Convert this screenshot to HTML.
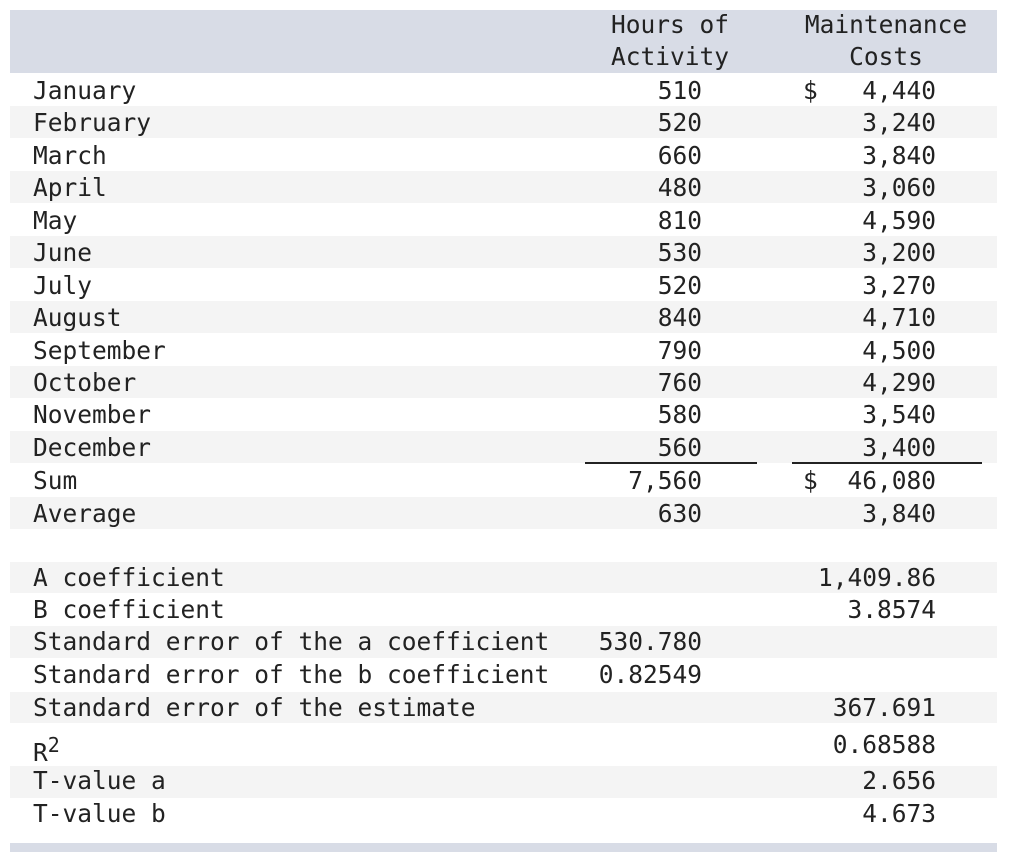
<!DOCTYPE html>
<html><head><meta charset="utf-8"><style>
body{margin:0;background:#fff;width:1024px;height:863px;position:relative;overflow:hidden;font-family:"DejaVu Sans Mono","Liberation Mono",monospace;font-size:24.5px;color:#222}
.b{position:absolute;left:10px;width:987px}
.g{background:#f4f4f4}
.t{position:absolute;line-height:32px;height:32px;white-space:nowrap;margin-top:1px}
.l{left:33px}
.h{right:322px;text-align:right}
.c{right:88px;text-align:right}
.d{left:803px}
.hd{position:absolute;text-align:center;line-height:32px}
.ln{position:absolute;height:2px;background:#222;top:462px}
</style></head><body>
<div class="b" style="top:10px;height:63px;background:#d8dce6"></div>
<div class="hd" style="left:590px;width:160px;top:9px">Hours of<br>Activity</div>
<div class="hd" style="left:790px;width:192px;top:9px">Maintenance<br>Costs</div>

<div class="b g" style="top:106px;height:32px"></div>
<div class="b g" style="top:171px;height:32px"></div>
<div class="b g" style="top:236px;height:32px"></div>
<div class="b g" style="top:301px;height:32px"></div>
<div class="b g" style="top:366px;height:32px"></div>
<div class="b g" style="top:431px;height:32px"></div>
<div class="b g" style="top:497px;height:32px"></div>
<div class="b g" style="top:562px;height:31px"></div>
<div class="b g" style="top:626px;height:32px"></div>
<div class="b g" style="top:692px;height:31px"></div>
<div class="b g" style="top:766px;height:32px"></div>
<div class="b" style="top:843px;height:9px;background:#d8dce6"></div>

<div class="t l" style="top:74px">January</div><div class="t h" style="top:74px">510</div><div class="t d" style="top:74px">$</div><div class="t c" style="top:74px">4,440</div>
<div class="t l" style="top:106px">February</div><div class="t h" style="top:106px">520</div><div class="t c" style="top:106px">3,240</div>
<div class="t l" style="top:139px">March</div><div class="t h" style="top:139px">660</div><div class="t c" style="top:139px">3,840</div>
<div class="t l" style="top:171px">April</div><div class="t h" style="top:171px">480</div><div class="t c" style="top:171px">3,060</div>
<div class="t l" style="top:204px">May</div><div class="t h" style="top:204px">810</div><div class="t c" style="top:204px">4,590</div>
<div class="t l" style="top:236px">June</div><div class="t h" style="top:236px">530</div><div class="t c" style="top:236px">3,200</div>
<div class="t l" style="top:269px">July</div><div class="t h" style="top:269px">520</div><div class="t c" style="top:269px">3,270</div>
<div class="t l" style="top:301px">August</div><div class="t h" style="top:301px">840</div><div class="t c" style="top:301px">4,710</div>
<div class="t l" style="top:334px">September</div><div class="t h" style="top:334px">790</div><div class="t c" style="top:334px">4,500</div>
<div class="t l" style="top:366px">October</div><div class="t h" style="top:366px">760</div><div class="t c" style="top:366px">4,290</div>
<div class="t l" style="top:398px">November</div><div class="t h" style="top:398px">580</div><div class="t c" style="top:398px">3,540</div>
<div class="t l" style="top:431px">December</div><div class="t h" style="top:431px">560</div><div class="t c" style="top:431px">3,400</div>
<div class="ln" style="left:585px;width:172px"></div>
<div class="ln" style="left:792px;width:190px"></div>
<div class="t l" style="top:464px">Sum</div><div class="t h" style="top:464px">7,560</div><div class="t d" style="top:464px">$</div><div class="t c" style="top:464px">46,080</div>
<div class="t l" style="top:497px">Average</div><div class="t h" style="top:497px">630</div><div class="t c" style="top:497px">3,840</div>

<div class="t l" style="top:561px">A coefficient</div><div class="t c" style="top:561px">1,409.86</div>
<div class="t l" style="top:593px">B coefficient</div><div class="t c" style="top:593px">3.8574</div>
<div class="t l" style="top:625px">Standard error of the a coefficient</div><div class="t h" style="top:625px">530.780</div>
<div class="t l" style="top:658px">Standard error of the b coefficient</div><div class="t h" style="top:658px">0.82549</div>
<div class="t l" style="top:691px">Standard error of the estimate</div><div class="t c" style="top:691px">367.691</div>
<div class="t l" style="top:728px">R<sup style="font-size:20px;vertical-align:9px">2</sup></div><div class="t c" style="top:728px">0.68588</div>
<div class="t l" style="top:764px">T-value a</div><div class="t c" style="top:764px">2.656</div>
<div class="t l" style="top:797px">T-value b</div><div class="t c" style="top:797px">4.673</div>
</body></html>
